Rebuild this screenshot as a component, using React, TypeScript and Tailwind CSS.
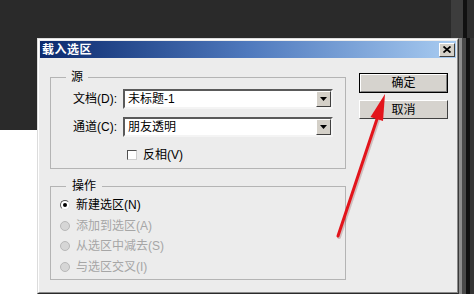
import React from "react";

const FONT = { fontFamily: '"Liberation Sans", "Noto Sans CJK SC", sans-serif' };

function DropBtn() {
  return (
    <div className="w-[15px] h-full bg-[#d4d0c8] border border-t-white border-l-white border-r-[#404040] border-b-[#404040] flex items-center justify-center">
      <svg width="7" height="4" viewBox="0 0 7 4">
        <path d="M0 0 H7 L3.5 4 Z" fill="#000" />
      </svg>
    </div>
  );
}

function Select({ value }: { value: string }) {
  return (
    <div className="w-[210px] h-[20px] border-2 border-t-[#5a5a5a] border-l-[#5a5a5a] border-r-[#f4f4f4] border-b-[#f4f4f4] bg-white flex items-stretch">
      <div className="flex-1 pl-[3px] text-[12px] leading-[16px] text-black flex items-center">{value}</div>
      <DropBtn />
    </div>
  );
}

function Radio({ label, checked, disabled }: { label: string; checked?: boolean; disabled?: boolean }) {
  return (
    <div className="flex items-center h-[20.5px] pl-[9px]">
      <div
        className={
          "w-[10px] h-[10px] rounded-full border flex items-center justify-center " +
          (disabled
            ? "bg-[#d6d6d6] border-[#b8b8b8]"
            : "bg-white border-t-[#555] border-l-[#555] border-r-[#ddd] border-b-[#ddd]")
        }
      >
        {checked && <div className="w-[4px] h-[4px] rounded-full bg-black" />}
      </div>
      <span className={"ml-[6px] text-[12px] leading-[16px] " + (disabled ? "text-[#a6a6a6]" : "text-black")}>
        {label}
      </span>
    </div>
  );
}

function Dialog() {
  return (
    <div className="w-[422px] h-[256px] shrink-0 border border-t-[#dcdcdc] border-l-[#dcdcdc] border-r-[#3a3a3a] border-b-[#2a2a2a] bg-[#ececec]">
      <div className="h-full border border-t-white border-l-white border-r-[#8a8a8a] border-b-[#8a8a8a] p-px flex flex-col">
        <div className="h-[17px] shrink-0 bg-linear-to-r from-[#0c2a6e] via-[#4f79bd] to-[#a9ccf1] flex items-center justify-between pl-[2px] pr-[1px]">
          <span className="text-white font-bold text-[12px] leading-[14px] tracking-[0.5px]">载入选区</span>
          <div className="w-[16px] h-[14px] bg-[#d4d0c8] border border-t-white border-l-white border-r-[#404040] border-b-[#404040] flex items-center justify-center">
            <svg width="8" height="7" viewBox="0 0 8 7">
              <path d="M0.5 0.5 L7.5 6.5 M7.5 0.5 L0.5 6.5" stroke="#000" strokeWidth="1.8" />
            </svg>
          </div>
        </div>
        <div className="flex flex-1">
          <div className="ml-[10px] w-[296px] flex flex-col">
            <fieldset className="mt-[12px] h-[99px] border border-[#b4b4b4]">
              <legend className="ml-[15px] px-[5px] text-[12px] leading-[14px] text-black">源</legend>
              <div className="pl-[22px] mt-[5px] flex items-center h-[20px]">
                <span className="w-[50px] text-[12px] leading-[16px] text-black">文档(D):</span>
                <Select value="未标题-1" />
              </div>
              <div className="pl-[22px] mt-[8px] flex items-center h-[20px]">
                <span className="w-[50px] text-[12px] leading-[16px] text-black">通道(C):</span>
                <Select value="朋友透明" />
              </div>
              <div className="pl-[76px] mt-[10px] flex items-center h-[16px]">
                <div className="w-[10px] h-[10px] bg-white border border-t-[#505050] border-l-[#505050] border-r-[#cfcfcf] border-b-[#cfcfcf]" />
                <span className="ml-[6px] text-[12px] leading-[16px] text-black">反相(V)</span>
              </div>
            </fieldset>
            <fieldset className="mt-[10px] h-[101px] border border-[#b4b4b4]">
              <legend className="ml-[15px] px-[6px] text-[12px] leading-[14px] text-black">操作</legend>
              <div className="mt-[2px] flex flex-col">
                <Radio label="新建选区(N)" checked />
                <Radio label="添加到选区(A)" disabled />
                <Radio label="从选区中减去(S)" disabled />
                <Radio label="与选区交叉(I)" disabled />
              </div>
            </fieldset>
          </div>
          <div className="ml-[13px] w-[89px] flex flex-col">
            <div className="mt-[15px] h-[20px] border border-black">
              <div className="h-full bg-[#d6d3ce] border border-t-white border-l-white border-r-[#808080] border-b-[#808080] flex items-center justify-center text-[12px] leading-[14px] text-black">
                确定
              </div>
            </div>
            <div className="mt-[7px] h-[19px] bg-[#d6d3ce] border border-t-white border-l-white border-r-[#404040] border-b-[#404040] flex items-center justify-center text-[12px] leading-[14px] text-black">
              取消
            </div>
          </div>
        </div>
      </div>
    </div>
  );
}

export default function App() {
  return (
    <div className="relative w-[474px] h-[294px] overflow-hidden bg-white flex flex-col" style={FONT}>
      <div className="h-[38px] shrink-0 flex">
        <div className="w-[451px] bg-[#2a2a2a]" />
        <div className="w-[12px] bg-[#3d3d3d]" />
        <div className="w-[4px] bg-[#111111]" />
        <div className="flex-1 bg-[#2e2e2e]" />
      </div>
      <div className="flex h-[256px]">
        <div className="w-[37px] shrink-0 flex flex-col">
          <div className="h-[92px] bg-[#2a2a2a]" />
          <div className="flex-1 bg-white" />
        </div>
        <Dialog />
        <div className="flex flex-1">
          <div className="w-[3px] bg-[#8e8e8e]" />
          <div className="w-[4px] bg-[#4a4a4a]" />
          <div className="w-[4px] bg-[#111111]" />
          <div className="flex-1 bg-[#353535]" />
        </div>
      </div>
      <svg className="absolute inset-0 pointer-events-none" width="474" height="294" viewBox="0 0 474 294">
        <line x1="338" y1="236" x2="378" y2="116" stroke="#7a2a2a" strokeOpacity="0.25" strokeWidth="4" strokeLinecap="round" transform="translate(1,1)" />
        <line x1="338" y1="236" x2="378" y2="116" stroke="#e3141b" strokeWidth="3" strokeLinecap="round" />
        <polygon points="385,94 370.5,117 383,121" fill="#e3141b" />
      </svg>
    </div>
  );
}
